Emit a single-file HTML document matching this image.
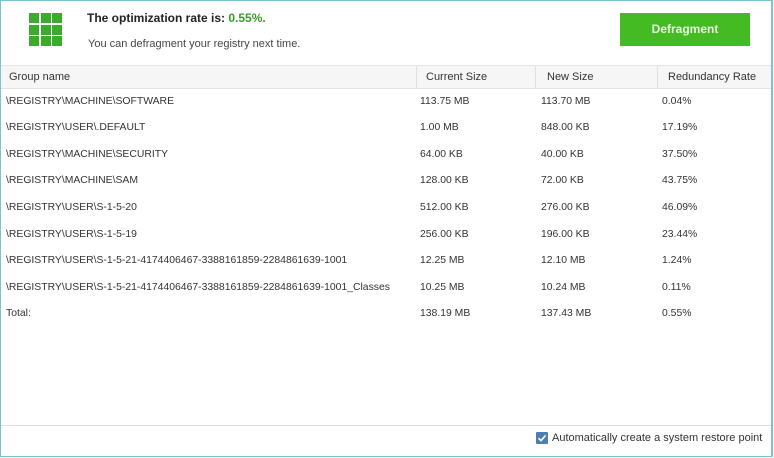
<!DOCTYPE html>
<html><head><style>
body{margin:0;width:774px;height:458px;overflow:hidden;background:#fff;font-family:"Liberation Sans",sans-serif;font-size:11px;color:#333;}
.frame{position:absolute;left:0;top:0;width:770px;height:455px;border:1px solid #7cc3d2;border-right:2px solid #7cc3d2;}
.grid{position:absolute;left:29px;top:13px;width:33px;height:33px;display:grid;grid-template-columns:repeat(3,10px);grid-template-rows:repeat(3,10px);gap:1.5px;}
.grid div{background:#3aab2a;}
.t1{position:absolute;left:87px;top:11px;font-size:12px;font-weight:bold;color:#222;}
.t1 span{color:#3a9a2a;}
.t2{position:absolute;left:88px;top:38px;font-size:11px;color:#444;}
.btn{position:absolute;left:620px;top:13px;width:130px;height:33px;background:#44bb22;color:#e8f8e0;font-weight:bold;font-size:12px;text-align:center;line-height:33px;}
.hdr{position:absolute;left:1px;top:65px;width:770px;height:22px;background:#f6f6f6;border-top:1px solid #e4e4e4;border-bottom:1px solid #e4e4e4;}
.hdr div{position:absolute;top:0;height:22px;line-height:22px;}
.sep{border-left:1px solid #e0e0e0;}
.row{position:absolute;left:0;width:770px;height:26px;line-height:26px;font-size:10.4px;}
.row div{position:absolute;top:0;}
.foot{position:absolute;left:1px;top:425px;width:770px;border-top:1px solid #ddd;}
.cb{position:absolute;left:536px;top:432px;width:12px;height:12px;background:#4d7fb0;border-radius:1px;}
.ct{position:absolute;left:552px;top:432px;font-size:11px;color:#333;}
</style></head><body>
<div class="frame"></div>
<div class="grid"><div></div><div></div><div></div><div></div><div></div><div></div><div></div><div></div><div></div></div>
<div class="t1">The optimization rate is: <span>0.55%.</span></div>
<div class="t2">You can defragment your registry next time.</div>
<div class="btn">Defragment</div>
<div class="hdr">
<div style="left:8px">Group name</div>
<div class="sep" style="left:415px;padding-left:9px">Current Size</div>
<div class="sep" style="left:534px;padding-left:11px">New Size</div>
<div class="sep" style="left:656px;padding-left:10px">Redundancy Rate</div>
</div>
<div class="row" style="top:89px"><div style="left:6px">\REGISTRY\MACHINE\SOFTWARE</div><div style="left:420px">113.75 MB</div><div style="left:541px">113.70 MB</div><div style="left:662px">0.04%</div></div>
<div class="row" style="top:115px"><div style="left:6px">\REGISTRY\USER\.DEFAULT</div><div style="left:420px">1.00 MB</div><div style="left:541px">848.00 KB</div><div style="left:662px">17.19%</div></div>
<div class="row" style="top:142px"><div style="left:6px">\REGISTRY\MACHINE\SECURITY</div><div style="left:420px">64.00 KB</div><div style="left:541px">40.00 KB</div><div style="left:662px">37.50%</div></div>
<div class="row" style="top:168px"><div style="left:6px">\REGISTRY\MACHINE\SAM</div><div style="left:420px">128.00 KB</div><div style="left:541px">72.00 KB</div><div style="left:662px">43.75%</div></div>
<div class="row" style="top:195px"><div style="left:6px">\REGISTRY\USER\S-1-5-20</div><div style="left:420px">512.00 KB</div><div style="left:541px">276.00 KB</div><div style="left:662px">46.09%</div></div>
<div class="row" style="top:222px"><div style="left:6px">\REGISTRY\USER\S-1-5-19</div><div style="left:420px">256.00 KB</div><div style="left:541px">196.00 KB</div><div style="left:662px">23.44%</div></div>
<div class="row" style="top:248px"><div style="left:6px">\REGISTRY\USER\S-1-5-21-4174406467-3388161859-2284861639-1001</div><div style="left:420px">12.25 MB</div><div style="left:541px">12.10 MB</div><div style="left:662px">1.24%</div></div>
<div class="row" style="top:275px"><div style="left:6px">\REGISTRY\USER\S-1-5-21-4174406467-3388161859-2284861639-1001_Classes</div><div style="left:420px">10.25 MB</div><div style="left:541px">10.24 MB</div><div style="left:662px">0.11%</div></div>
<div class="row" style="top:301px"><div style="left:6px">Total:</div><div style="left:420px">138.19 MB</div><div style="left:541px">137.43 MB</div><div style="left:662px">0.55%</div></div>
<div class="foot"></div>
<div class="cb"><svg width="12" height="12" viewBox="0 0 12 12"><path d="M2.5 6.2 L5 8.6 L9.6 3.4" stroke="#fff" stroke-width="1.6" fill="none"/></svg></div>
<div class="ct">Automatically create a system restore point</div>
</body></html>
